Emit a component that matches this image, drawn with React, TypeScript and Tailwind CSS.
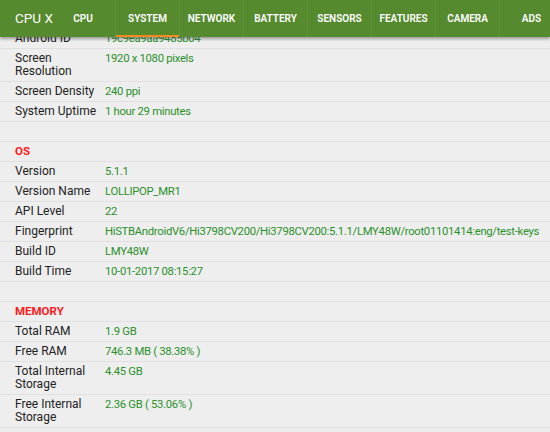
const tabs = ['CPU', 'SYSTEM', 'NETWORK', 'BATTERY', 'SENSORS', 'FEATURES', 'CAMERA', 'ADS']

type Row =
  | { kind: 'item'; label: string; value: string }
  | { kind: 'head'; label: string }
  | { kind: 'blank' }

const rows: Row[] = [
  { kind: 'item', label: 'Android ID', value: '19c9ea9aa9485b04' },
  { kind: 'item', label: 'Screen Resolution', value: '1920 x 1080 pixels' },
  { kind: 'item', label: 'Screen Density', value: '240 ppi' },
  { kind: 'item', label: 'System Uptime', value: '1 hour 29 minutes' },
  { kind: 'blank' },
  { kind: 'head', label: 'OS' },
  { kind: 'item', label: 'Version', value: '5.1.1' },
  { kind: 'item', label: 'Version Name', value: 'LOLLIPOP_MR1' },
  { kind: 'item', label: 'API Level', value: '22' },
  { kind: 'item', label: 'Fingerprint', value: 'HiSTBAndroidV6/Hi3798CV200/Hi3798CV200:5.1.1/LMY48W/root01101414:eng/test-keys' },
  { kind: 'item', label: 'Build ID', value: 'LMY48W' },
  { kind: 'item', label: 'Build Time', value: '10-01-2017 08:15:27' },
  { kind: 'blank' },
  { kind: 'head', label: 'MEMORY' },
  { kind: 'item', label: 'Total RAM', value: '1.9 GB' },
  { kind: 'item', label: 'Free RAM', value: '746.3 MB ( 38.38% )' },
  { kind: 'item', label: 'Total Internal Storage', value: '4.45 GB' },
  { kind: 'item', label: 'Free Internal Storage', value: '2.36 GB ( 53.06% )' },
  { kind: 'blank' },
]

function InfoRow({ row }: { row: Row }) {
  if (row.kind === 'blank') {
    return <div className="h-[20px] border-b border-[#e0e0e0]" />
  }
  if (row.kind === 'head') {
    return (
      <div className="px-[15px] py-[3px] leading-[13px] border-b border-[#e0e0e0] text-[#ff1a1a] text-[11.5px] font-bold">
        {row.label}
      </div>
    )
  }
  return (
    <div className="flex px-[15px] py-[3px] leading-[13px] border-b border-[#e0e0e0]">
      <div className="w-[90px] shrink-0 pr-2 text-[#222222]">{row.label}</div>
      <div className="whitespace-nowrap text-[#2b902b] text-[11.3px] tracking-[-0.3px]">{row.value}</div>
    </div>
  )
}

export default function App() {
  return (
    <div className="w-[550px] h-[432px] overflow-hidden bg-[#eeeeee] font-['Roboto',sans-serif] text-[12px]">
      <div className="relative z-10 h-[37px] bg-[#568a2f] flex items-stretch shadow-[0_2px_3px_rgba(0,0,0,0.35)]">
        <div className="w-[51px] shrink-0 flex items-center pl-[15px] text-white text-[13.5px] whitespace-nowrap">CPU X</div>
        {tabs.map((t, i) => (
          <div
            key={t}
            className={`relative w-[64px] shrink-0 flex items-center justify-center text-white text-[10px] font-semibold ${i > 0 ? 'border-l border-[#5f9338]' : ''}`}
          >
            {t}
            {t === 'SYSTEM' && <div className="absolute left-0 right-0 bottom-0 h-[2px] bg-[#f28c1e]" />}
          </div>
        ))}
      </div>
      <div className="-mt-[8px]">
        {rows.map((r, i) => (
          <InfoRow key={i} row={r} />
        ))}
      </div>
    </div>
  )
}
